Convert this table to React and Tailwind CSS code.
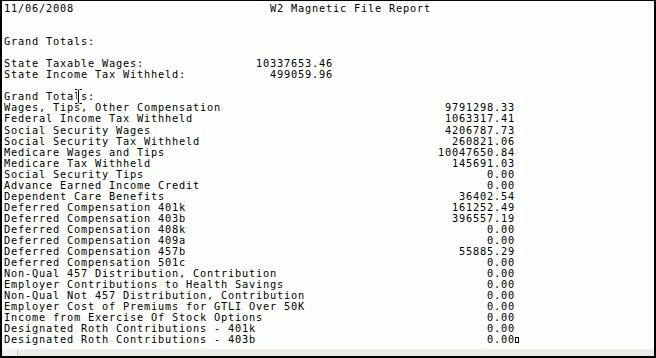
const state = [
  ["State Taxable Wages:", "10337653.46"],
  ["State Income Tax Withheld:", "499059.96"],
];

const totals = [
  ["Wages, Tips, Other Compensation", "9791298.33"],
  ["Federal Income Tax Withheld", "1063317.41"],
  ["Social Security Wages", "4206787.73"],
  ["Social Security Tax Withheld", "260821.06"],
  ["Medicare Wages and Tips", "10047650.84"],
  ["Medicare Tax Withheld", "145691.03"],
  ["Social Security Tips", "0.00"],
  ["Advance Earned Income Credit", "0.00"],
  ["Dependent Care Benefits", "36402.54"],
  ["Deferred Compensation 401k", "161252.49"],
  ["Deferred Compensation 403b", "396557.19"],
  ["Deferred Compensation 408k", "0.00"],
  ["Deferred Compensation 409a", "0.00"],
  ["Deferred Compensation 457b", "55885.29"],
  ["Deferred Compensation 501c", "0.00"],
  ["Non-Qual 457 Distribution, Contribution", "0.00"],
  ["Employer Contributions to Health Savings", "0.00"],
  ["Non-Qual Not 457 Distribution, Contribution", "0.00"],
  ["Employer Cost of Premiums for GTLI Over 50K", "0.00"],
  ["Income from Exercise Of Stock Options", "0.00"],
  ["Designated Roth Contributions - 401k", "0.00"],
  ["Designated Roth Contributions - 403b", "0.00"],
];

const head = [
  "11/06/2008".padEnd(38) + "W2 Magnetic File Report",
  "",
  "",
  "Grand Totals:",
  "",
  ...state.map(([label, value]) => label.padEnd(36) + value.padStart(11)),
  "",
  "Grand Totals:",
];

export default function App() {
  const rows = totals.map(([label, value]) => label.padEnd(62) + value.padStart(11));
  const last = rows.pop();
  return (
    <div className="relative flex h-[358px] w-[656px] flex-col border-t border-l-2 border-r-2 border-b-2 border-black bg-[#fcfffb]">
      <pre className="flex-1 overflow-hidden pl-[2px] pt-[2px] text-[10.3px] leading-[11.05px] tracking-[0.8px] text-black" style={{ fontFamily: '"DejaVu Sans Mono", "Liberation Mono", monospace' }}>
        {[...head, ...rows].join("\n") + "\n"}
        {last}
        <span className="inline-block h-[6px] w-[4px] border border-black align-baseline" />
      </pre>
      <div className="flex h-[7px] border-t border-[#f4f3ee] bg-[#ecebe4]">
        <div className="ml-[1px] h-full w-[15px] border-r border-[#c9c7ba] bg-[#f3f2ec]" />
      </div>
      <svg className="absolute left-[72px] top-[87px]" width="9" height="17" viewBox="0 0 9 17">
        <path d="M1 1.5h2.5M5.5 1.5H8M4.5 2v13M1 15.5h2.5M5.5 15.5H8" stroke="#fff" strokeWidth="2.5" fill="none" />
        <path d="M1 1.5h2.5M5.5 1.5H8M4.5 2v13M1 15.5h2.5M5.5 15.5H8" stroke="#000" strokeWidth="1" fill="none" />
      </svg>
    </div>
  );
}
